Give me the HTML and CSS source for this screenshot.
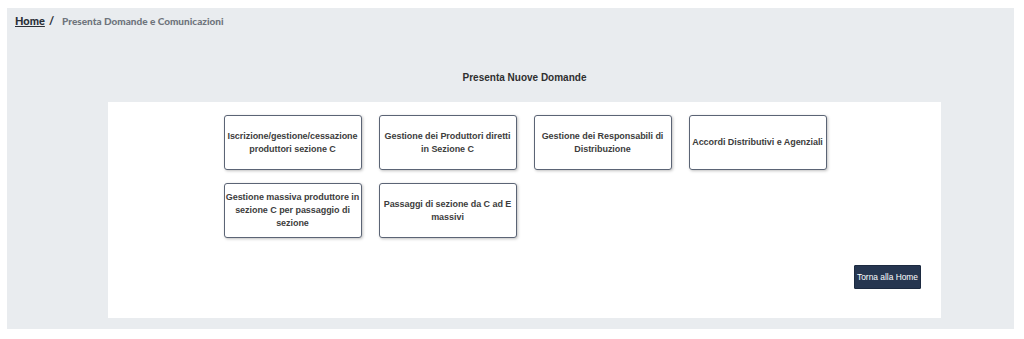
FILE: index.html
```html
<!DOCTYPE html>
<html lang="it">
<head>
<meta charset="utf-8">
<title>Presenta Domande e Comunicazioni</title>
<link rel="stylesheet" href="styles.css">
</head>
<body>
<div class="page">
  <div class="panel">
    <nav class="breadcrumb">
      <a class="crumb-home" href="#">Home</a>
      <span class="crumb-sep">/</span>
      <span class="crumb-current">Presenta Domande e Comunicazioni</span>
    </nav>
    <h1 class="title">Presenta Nuove Domande</h1>
    <section class="card-area">
      <div class="cards">
        <button class="card">Iscrizione/gestione/cessazione produttori sezione C</button>
        <button class="card">Gestione dei Produttori diretti in Sezione C</button>
        <button class="card">Gestione dei Responsabili di Distribuzione</button>
        <button class="card">Accordi Distributivi e Agenziali</button>
        <button class="card">Gestione massiva produttore in sezione C per passaggio di sezione</button>
        <button class="card">Passaggi di sezione da C ad E massivi</button>
      </div>
      <div class="actions">
        <button class="back-btn">Torna alla Home</button>
      </div>
    </section>
  </div>
</div>
</body>
</html>
```

FILE: styles.css
```css
html, body {
  margin: 0;
  padding: 0;
  background: #ffffff;
}

.page {
  padding: 8px 10px 10px 7px;
}

.panel {
  background: #e9ecef;
  height: 321px;
  box-sizing: border-box;
  padding-top: 6px;
  display: flex;
  flex-direction: column;
}

.breadcrumb {
  font-family: Lato, "Liberation Sans", sans-serif;
  font-weight: 900;
  font-size: 10px;
  line-height: 14px;
  padding-left: 8px;
  display: flex;
  align-items: center;
}

.crumb-home {
  color: #2b3038;
  text-decoration: underline;
  font-size: 11px;
}

.crumb-sep {
  color: #2b3038;
  margin: 0 8px 0 4px;
  font-size: 11px;
}

.crumb-current {
  color: #6f757d;
  font-size: 10px;
}

.title {
  font-family: "Liberation Sans", Arial, sans-serif;
  font-size: 10px;
  font-weight: 700;
  color: #2f2f2f;
  text-align: center;
  margin: 42px 0 0 0;
  line-height: 16px;
  padding-left: 28px;
}

.card-area {
  background: #ffffff;
  margin: 16px 73px 0 101px;
  height: 216px;
  box-sizing: border-box;
  padding: 13px 20px 0 20px;
  display: flex;
  flex-direction: column;
}

.cards {
  display: grid;
  grid-template-columns: repeat(4, 138px);
  grid-auto-rows: 55px;
  column-gap: 17px;
  row-gap: 13px;
  justify-content: center;
  padding-left: 1px;
}

.card {
  background: #ffffff;
  border: 1px solid #5b6475;
  border-radius: 3px;
  box-shadow: 1px 1px 3px rgba(0, 0, 0, 0.25);
  font-family: "Liberation Sans", Arial, sans-serif;
  font-weight: 700;
  font-size: 9px;
  letter-spacing: -0.05px;
  line-height: 13px;
  color: #3d3d3d;
  text-align: center;
  padding: 0;
  margin: 0;
  cursor: pointer;
}

.actions {
  display: flex;
  justify-content: flex-end;
  margin-top: 27px;
}

.back-btn {
  background: #263650;
  color: #ffffff;
  border: 1px solid #1c2a40;
  border-radius: 1px;
  font-family: "Liberation Sans", Arial, sans-serif;
  font-size: 8.4px;
  height: 24px;
  width: 67px;
  padding: 0;
  margin: 0;
}
```
